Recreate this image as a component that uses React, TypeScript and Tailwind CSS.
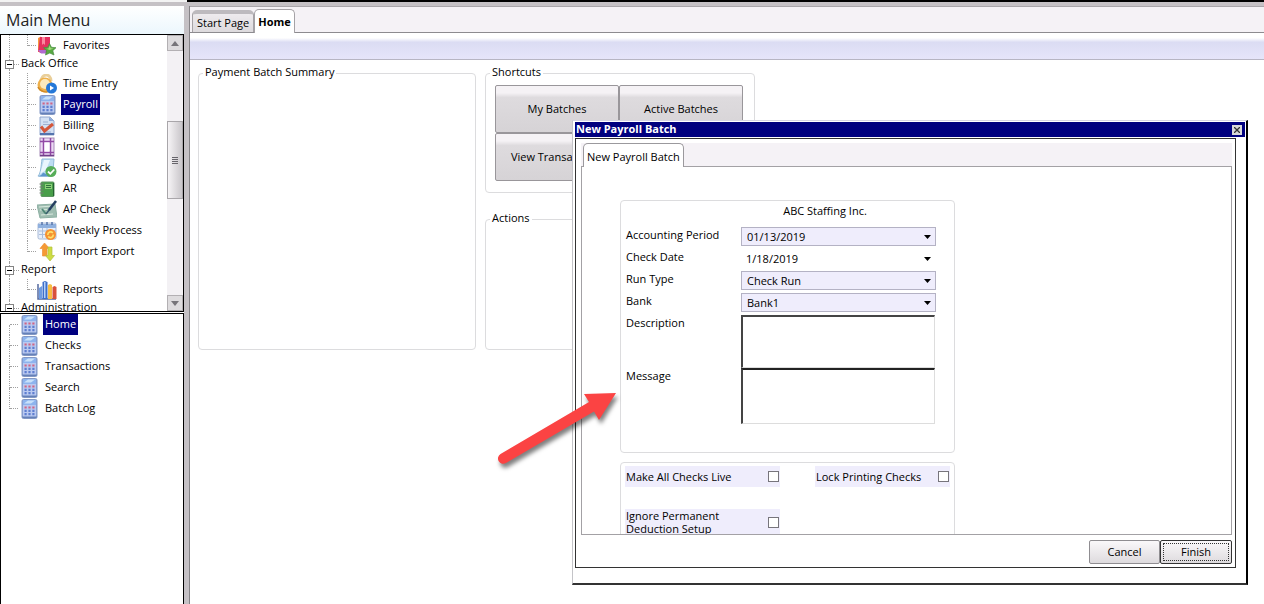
import { useState } from 'react'
import type { ReactNode } from 'react'

function CalculatorIcon() {
  return (
    <svg viewBox="0 0 20 20" className="size-5 shrink-0" aria-hidden="true">
      <rect x="3" y="0.5" width="15" height="19" rx="1.5" fill="#8aa5dc" stroke="#8498c4" />
      <path d="M3.500 17h14v2h-14z" fill="#6480b8" />
      <rect x="4" y="1" width="13" height="5" fill="#8db4ee" />
      <path d="M5 4.500 9 1.500h7l-4 3z" fill="#c9e1fa" />
      <rect x="4" y="6" width="13" height="11.500" fill="#bac9f0" />
      <path d="M5.500 8.500h2.200M9.400 8.500h2.200M13.300 8.500h2.200" stroke="#cf6585" strokeWidth="2.200" />
      <path
        d="M5.500 11.800h2.200M9.400 11.800h2.200M13.300 11.800h2.200M5.500 15.200h2.200M9.400 15.200h2.200M13.300 15.200h2.200"
        stroke="#5f7fd0"
        strokeWidth="2.200"
      />
    </svg>
  )
}

function FavoritesIcon() {
  return (
    <svg viewBox="0 0 20 20" className="size-5 shrink-0" aria-hidden="true">
      <path d="M1 2 4 0.5V17l-3-1.500z" fill="#f59a3c" />
      <path d="M3 1h10v16H4l-3-1.500z" fill="#e5305f" />
      <path d="M5 1h3v8L6.500 7.500 5 9z" fill="#f98a9f" />
      <path d="M1 14h8v3.500H4z" fill="#b06ad0" />
      <path
        d="m12.500 7.500 2 3.800 4.500.4-3.200 3 1.200 4.300-4.200-2-4.300 2 1-4.300-3-3 4.300-.5z"
        fill="#58a942"
        stroke="#4b8d43"
        strokeWidth="0.7"
      />
      <path d="m12.500 9.500 1.300 2.700 2.700.4-4 1.400-3-1.300 2-.3z" fill="#a3dc7c" />
    </svg>
  )
}

function TimeEntryIcon() {
  return (
    <svg viewBox="0 0 20 20" className="size-5 shrink-0" aria-hidden="true">
      <path d="M4 8c0-9 10-9 10-1" fill="none" stroke="#e9cf9a" strokeWidth="3" />
      <circle cx="8" cy="11" r="7.500" fill="#eeb04b" />
      <circle cx="8" cy="10" r="5" fill="#fbe9bd" />
      <path d="M1 13c2 5 9 6 12 4" fill="none" stroke="#d08a26" strokeWidth="1.500" />
      <circle cx="14.500" cy="14" r="5.500" fill="#2478d8" />
      <path d="m13 11.500 4 2.500-4 2.500z" fill="#fff" />
    </svg>
  )
}

function BillingIcon() {
  return (
    <svg viewBox="0 0 20 20" className="size-5 shrink-0" aria-hidden="true">
      <path d="M3 1h10l4 4v14H3z" fill="#d3e1f4" stroke="#93a8ce" />
      <path d="M12 1v4h5z" fill="#8ba9d8" />
      <path d="M6 6h5M6 8.500h8M6 16h8" stroke="#9db1d3" />
      <path d="m4 10.500 3.500 4.500L16 8" fill="none" stroke="#d4573b" strokeWidth="3" />
      <path d="M3 18h14" stroke="#5474ae" strokeWidth="2" />
    </svg>
  )
}

function InvoiceIcon() {
  return (
    <svg viewBox="0 0 20 20" className="size-5 shrink-0" aria-hidden="true">
      <rect x="3" y="1" width="14" height="18" fill="#ecd9f4" stroke="#a58bb8" />
      <path d="M6.500 1v18M13.500 1v18M3 4.500h14M3 15.500h14" stroke="#914aa5" strokeWidth="1.500" />
      <rect x="7.500" y="5.500" width="5" height="9" fill="#fff" />
      <path d="M3 18.500h14" stroke="#72408a" strokeWidth="1.500" />
    </svg>
  )
}

function PaycheckIcon() {
  return (
    <svg viewBox="0 0 20 20" className="size-5 shrink-0" aria-hidden="true">
      <path d="M5 1h12l-1 12-4 5H1c3-3 3-10 4-17z" fill="#bddcf2" stroke="#93bbd9" />
      <path d="M7 2h6L9 12 3 16z" fill="#eaf6fe" />
      <path d="M0 18.500c3 0 5-2 6-4l8 4z" fill="#5c95cb" />
      <circle cx="14" cy="13.500" r="5.500" fill="#57ae59" />
      <path d="m11 13.500 2.300 2.300 4-4.300" fill="none" stroke="#fff" strokeWidth="1.800" />
    </svg>
  )
}

function LedgerIcon() {
  return (
    <svg viewBox="0 0 20 20" className="size-5 shrink-0" aria-hidden="true">
      <rect x="4" y="3" width="13" height="14.500" rx="1" fill="#489e49" stroke="#5c9460" />
      <rect x="8" y="5" width="7" height="5" fill="#8bcf78" />
      <path d="M9 6.500h5M9 8.500h5" stroke="#2f713d" />
      <path d="M2.500 5h4M2.500 8h4M2.500 11h4M2.500 14h4" stroke="#727b75" strokeWidth="1.200" />
      <path d="M16.500 4v13" stroke="#256132" />
    </svg>
  )
}

function ApCheckIcon() {
  return (
    <svg viewBox="0 0 20 20" className="size-5 shrink-0" aria-hidden="true">
      <path d="m0 5 18-1 2 13-17 1z" fill="#9fbdb1" stroke="#8db0a3" />
      <path d="m2 7 14-1M3 10l7-.5M4 15l12-1" stroke="#d9e9df" />
      <path d="m5 9 4 5" stroke="#4f8777" strokeWidth="2" />
      <path d="m9 14 4-5" stroke="#385e6d" strokeWidth="1.500" />
      <path d="m12 10 7-9" stroke="#263f61" strokeWidth="2.600" />
    </svg>
  )
}

function WeeklyIcon() {
  return (
    <svg viewBox="0 0 20 20" className="size-5 shrink-0" aria-hidden="true">
      <rect x="1" y="2" width="18" height="16" rx="1.5" fill="#e7eefa" stroke="#a9bad7" />
      <path d="M1 3h18v4H1z" fill="#8fb0de" />
      <path d="M5 1v3M10 1v3M15 1v3" stroke="#5876aa" strokeWidth="1.500" />
      <path d="M2 10h17M2 13.500h17M5.500 7v10M10 7v10" stroke="#a9bddc" />
      <circle cx="13.500" cy="13.500" r="5.500" fill="#f59132" />
      <path
        d="M10.800 14a2.800 2.800 0 0 1 5-2M16.200 13.500a2.800 2.800 0 0 1-5 2"
        fill="none"
        stroke="#ffe269"
        strokeWidth="1.600"
      />
    </svg>
  )
}

function ImportExportIcon() {
  return (
    <svg viewBox="0 0 20 20" className="size-5 shrink-0" aria-hidden="true">
      <path d="m7.500 1 5 5.500H10V14H5.500V6.500H3z" fill="#f59a35" stroke="#ee8f3a" strokeWidth="0.7" />
      <path d="m13 19-4.500-5.500h2.500V5h4v8.500h2.500z" fill="#cddc42" stroke="#b3c03d" strokeWidth="0.7" />
    </svg>
  )
}

function ReportsIcon() {
  return (
    <svg viewBox="0 0 20 20" className="size-5 shrink-0" aria-hidden="true">
      <path d="M1 4v15h18" fill="none" stroke="#54699e" strokeWidth="1.500" />
      <path d="m2 8 3-2v13H2z" fill="#6e9be1" />
      <path d="M5.500 2 8 1l2.500 1v17h-5z" fill="#3d6fca" />
      <path d="M7 2h1.500v16H7z" fill="#b6d0f5" />
      <path d="m11 5 2-1 2 1v14h-4z" fill="#f7bd42" />
      <path d="m15.500 7 2-1 2 1v12h-4z" fill="#d8503c" />
    </svg>
  )
}

const backOffice = [
  { label: 'Time Entry', icon: <TimeEntryIcon /> },
  { label: 'Payroll', icon: <CalculatorIcon />, selected: true },
  { label: 'Billing', icon: <BillingIcon /> },
  { label: 'Invoice', icon: <InvoiceIcon /> },
  { label: 'Paycheck', icon: <PaycheckIcon /> },
  { label: 'AR', icon: <LedgerIcon /> },
  { label: 'AP Check', icon: <ApCheckIcon /> },
  { label: 'Weekly Process', icon: <WeeklyIcon /> },
  { label: 'Import Export', icon: <ImportExportIcon /> },
]

const payrollPages = ['Home', 'Checks', 'Transactions', 'Search', 'Batch Log']

function TreeLabel({ label, selected }: { label: string; selected?: boolean }) {
  return (
    <a
      href="#"
      className={
        selected
          ? 'flex h-full items-center bg-[#00007f] px-0.5 text-white'
          : 'flex h-full items-center px-0.5'
      }
    >
      {label}
    </a>
  )
}

function TreeItem({ label, icon, selected, last }: { label: string; icon: ReactNode; selected?: boolean; last?: boolean }) {
  return (
    <li className="flex h-[21px] items-center">
      <span className="w-[9px] self-stretch border-r border-dotted border-[#a0a0a0]" />
      <span
        className={
          last
            ? 'h-[11px] w-[18px] self-start border-r border-dotted border-[#a0a0a0]'
            : 'w-[18px] self-stretch border-r border-dotted border-[#a0a0a0]'
        }
      />
      <span className="mr-px w-2 border-t border-dotted border-[#a0a0a0]" />
      <span className="mr-1">{icon}</span>
      <TreeLabel label={label} selected={selected} />
    </li>
  )
}

function TreeGroup({ label }: { label: string }) {
  return (
    <li className="flex h-[17px] items-center">
      <span className="ml-1 flex w-[9px] flex-col self-stretch">
        <span className="w-[5px] flex-1 border-r border-dotted border-[#a0a0a0]" />
        <button
          type="button"
          aria-label={`Collapse ${label}`}
          className="flex size-[9px] items-center justify-center border border-[#848484] bg-white"
        >
          <span className="h-px w-[5px] bg-black" />
        </button>
        <span className="w-[5px] flex-1 border-r border-dotted border-[#a0a0a0]" />
      </span>
      <span className="mr-0.5 w-[5px] border-t border-dotted border-[#a0a0a0]" />
      <span className="pb-0.5">{label}</span>
    </li>
  )
}

function ScrollButton({ up }: { up?: boolean }) {
  return (
    <button
      type="button"
      aria-label={up ? 'Scroll up' : 'Scroll down'}
      className="flex size-4 items-center justify-center border border-[#b3b0b3] bg-[#dedcde]"
    >
      <svg viewBox="0 0 8 5" className="h-[5px] w-2" aria-hidden="true">
        <path d={up ? 'M4 0 8 5H0z' : 'M0 0h8L4 5z'} fill="#77757a" />
      </svg>
    </button>
  )
}

function Sidebar() {
  return (
    <aside className="flex w-[184px] shrink-0 flex-col">
      <h1 className="flex h-7 items-center bg-linear-to-b from-white to-[#ecf7fd] px-1.5 text-base text-[#222]">
        Main Menu
      </h1>
      <div className="flex h-[278px] shrink-0 border border-black bg-white">
        <ul className="min-w-0 flex-1 overflow-hidden">
          <TreeItem label="Favorites" icon={<FavoritesIcon />} last />
          <TreeGroup label="Back Office" />
          {backOffice.map((item, i) => (
            <TreeItem key={item.label} {...item} last={i === backOffice.length - 1} />
          ))}
          <TreeGroup label="Report" />
          <TreeItem label="Reports" icon={<ReportsIcon />} last />
          <TreeGroup label="Administration" />
        </ul>
        <div className="flex w-4 flex-col bg-[#f3f1f4]">
          <ScrollButton up />
          <div className="mt-[70px] flex h-[78px] flex-col items-center justify-center gap-px border border-[#a9a6aa] bg-linear-to-r from-[#f6f4f6] to-[#c9c6ca]">
            <span className="h-px w-1.5 bg-[#66646a]" />
            <span className="h-px w-1.5 bg-[#66646a]" />
            <span className="h-px w-1.5 bg-[#66646a]" />
            <span className="h-px w-1.5 bg-[#66646a]" />
          </div>
          <div className="flex-1" />
          <ScrollButton />
        </div>
      </div>
      <ul className="mt-px flex-1 border border-b-0 border-black bg-white">
        {payrollPages.map((page, i) => (
          <li key={page} className="flex h-[21px] items-center">
            <span className="flex w-[9px] flex-col self-stretch">
              <span className={i === 0 ? 'flex-1' : 'flex-1 border-r border-dotted border-[#a0a0a0]'} />
              <span
                className={
                  i === payrollPages.length - 1 ? 'flex-1' : 'flex-1 border-r border-dotted border-[#a0a0a0]'
                }
              />
            </span>
            <span className="mr-px w-2 border-t border-dotted border-[#a0a0a0]" />
            <span className="mr-1">
              <CalculatorIcon />
            </span>
            <TreeLabel label={page} selected={i === 0} />
          </li>
        ))}
      </ul>
    </aside>
  )
}

function ShortcutButton({ children }: { children: ReactNode }) {
  return (
    <button
      type="button"
      className="h-12 rounded-xs border border-[#99969a] bg-linear-to-b from-[#f5f2f5] from-15% via-[#dedbde] via-25% to-[#d6d3d6]"
    >
      {children}
    </button>
  )
}

function Panel({ title, className, children }: { title: string; className: string; children?: ReactNode }) {
  return (
    <fieldset className={`rounded-sm border border-[#dcdcde] ${className}`}>
      <legend className="ml-1 h-4 px-0.5 leading-[14px]">{title}</legend>
      {children}
    </fieldset>
  )
}

function DropDown({ id, value, plain }: { id: string; value: string; plain?: boolean }) {
  return (
    <div className="relative h-[19px]">
      <select
        id={id}
        defaultValue={value}
        className={
          plain
            ? 'h-full w-full appearance-none bg-white px-[5px]'
            : 'h-full w-full appearance-none border border-[#b4b2c4] bg-[#efedfc] px-[5px]'
        }
      >
        <option>{value}</option>
      </select>
      <svg
        viewBox="0 0 7 4"
        className="pointer-events-none absolute top-2 right-[5px] h-1 w-[7px]"
        aria-hidden="true"
      >
        <path d="M0 0h7L3.500 4z" fill="#000" />
      </svg>
    </div>
  )
}

function CheckField({ label, className }: { label: string; className: string }) {
  return (
    <label className={`flex items-center justify-between bg-[#efedfc] px-px leading-[13px] ${className}`}>
      <span className="max-w-28">{label}</span>
      <input type="checkbox" className="size-[11px] appearance-none border border-[#77757c] bg-white" />
    </label>
  )
}

function PayrollDialog({ onClose }: { onClose: () => void }) {
  return (
    <section
      role="dialog"
      aria-label="New Payroll Batch"
      className="absolute top-[120px] right-4 bottom-[19px] left-[572px] flex flex-col border-t border-r-2 border-b-2 border-l border-t-[#d5d5e2] border-r-black border-b-[#333] border-l-[#c4c4c8] bg-white pt-px pl-0.5"
    >
      <header className="mr-px flex h-[15px] shrink-0 items-center justify-between bg-[#00007f] pr-[3px] pl-px font-bold text-white">
        New Payroll Batch
        <button
          type="button"
          aria-label="Close"
          onClick={onClose}
          className="flex size-[10px] items-center justify-center bg-[#d8d8d8]"
        >
          <svg viewBox="0 0 6 6" className="size-1.5" aria-hidden="true">
            <path d="m0 0 6 6M6 0 0 6" stroke="#333" strokeWidth="1.300" />
          </svg>
        </button>
      </header>

      <div className="mt-px mr-[10px] mb-[15px] flex min-h-0 flex-1 flex-col border border-[#333] pt-1 pr-[3px] pb-[3px] pl-[5px]">
        <div className="flex h-[23px] shrink-0 bg-[#f5f2f6] pl-0.5">
          <button
            type="button"
            className="relative z-10 -mb-px rounded-t-[5px] border border-b-0 border-[#9b999d] bg-white px-[3px] pt-1"
          >
            New Payroll Batch
          </button>
        </div>

        <div className="min-h-0 flex-1 overflow-hidden border border-[#a3a1a5] pt-[33px] pl-[38px]">
          <div className="h-[253px] w-[335px] rounded-sm border border-[#dcdcde] pt-px pl-[5px]">
            <p className="ml-[74px] w-[250px] text-center leading-[18px]">ABC Staffing Inc.</p>
            <div className="mt-[7px] grid grid-cols-[115px_195px] gap-y-[3px] leading-4">
              <label htmlFor="period">Accounting Period</label>
              <DropDown id="period" value="01/13/2019" />
              <label htmlFor="check-date">Check Date</label>
              <DropDown id="check-date" value="1/18/2019" plain />
              <label htmlFor="run-type">Run Type</label>
              <DropDown id="run-type" value="Check Run" />
              <label htmlFor="bank">Bank</label>
              <DropDown id="bank" value="Bank1" />
            </div>
            <div className="mt-[3px] grid grid-cols-[115px_195px] leading-4">
              <label htmlFor="description">Description</label>
              <textarea
                id="description"
                className="block h-[53px] w-[194px] resize-none border-t-2 border-r border-b border-l-2 border-[#ddd] border-t-[#444] border-l-[#444]"
              />
              <label htmlFor="message">Message</label>
              <textarea
                id="message"
                className="block h-14 w-[194px] resize-none border-t-2 border-r border-b border-l-2 border-[#ddd] border-t-[#222] border-l-[#444]"
              />
            </div>
          </div>

          <div className="mt-[9px] w-[335px] rounded-sm border border-[#dcdcde] p-1 pt-[3px]">
            <div className="flex justify-between">
              <CheckField label="Make All Checks Live" className="h-[21px] w-[155px]" />
              <CheckField label="Lock Printing Checks" className="h-[21px] w-[135px]" />
            </div>
            <CheckField label="Ignore Permanent Deduction Setup" className="mt-[22px] h-[26px] w-[155px]" />
          </div>
        </div>

        <footer className="mt-[5px] flex h-6 shrink-0 justify-end">
          <button
            type="button"
            onClick={onClose}
            className="w-[71px] rounded-xs border border-[#8f8d91] bg-linear-to-b from-[#faf8fa] to-[#dedbde]"
          >
            Cancel
          </button>
          <button
            type="submit"
            className="flex w-[72px] rounded-xs border border-[#333] bg-linear-to-b from-[#faf8fa] to-[#dedbde] p-0.5"
          >
            <span className="flex flex-1 items-center justify-center self-stretch border border-dotted border-[#333]">
              Finish
            </span>
          </button>
        </footer>
      </div>
    </section>
  )
}

function PointerArrow() {
  return (
    <svg
      viewBox="0 0 130 90"
      className="pointer-events-none absolute top-[384px] left-[494px] h-[90px] w-[130px] drop-shadow-[2px_4px_2px_rgba(0,0,0,0.5)]"
      aria-hidden="true"
    >
      <path d="M6.500 70 95 18l-5-8 32-1-17 27-5-8.500L12 79a5 5 0 0 1-5.500-9z" fill="#fb4343" />
    </svg>
  )
}

export default function App() {
  const [open, setOpen] = useState(true)

  return (
    <div className="relative flex h-screen flex-col overflow-hidden bg-white font-['Open_Sans',sans-serif] text-[11px] text-black">
      <div className="flex h-0.5 shrink-0">
        <div className="w-[187px] bg-[#f3f3f3]" />
        <div className="flex-1 bg-black" />
      </div>
      <div className="h-1 shrink-0 bg-[#c5c1c5]" />

      <div className="flex min-h-0 flex-1">
        <Sidebar />
        <div className="w-[5px] shrink-0 bg-[#c5c1c5]" />

        <main className="flex min-w-0 flex-1 flex-col border-l border-[#858387]">
          <nav className="flex h-[27px] shrink-0 items-end border-t border-b border-t-[#a9a6aa] border-b-[#8d8b8f] bg-[#f5f2f6] pl-0.5">
            <button
              type="button"
              className="h-[22px] rounded-t-[5px] border border-t-4 border-b-0 border-[#a5a2a6] border-t-[#bdbabe] bg-linear-to-b from-[#eeebee] to-[#dddadd] px-1"
            >
              Start Page
            </button>
            <button
              type="button"
              className="-mb-px h-6 rounded-t-[5px] border border-b-0 border-[#a5a2a6] bg-white px-[3px] pt-0.5 font-bold"
            >
              Home
            </button>
          </nav>
          <div className="mt-[5px] h-[22px] shrink-0 border-b border-[#b7b5c3] bg-linear-to-b from-white via-[#dbdcf3] via-20% to-[#e6e5fa]" />

          <div className="flex gap-[9px] pt-[5px] pl-2">
            <Panel title="Payment Batch Summary" className="h-[285px] w-[278px]" />
            <div className="flex w-[270px] flex-col gap-[18px]">
              <Panel title="Shortcuts" className="h-32">
                <div className="mt-1 mr-[11px] ml-[9px] grid grid-cols-2">
                  <ShortcutButton>My Batches</ShortcutButton>
                  <ShortcutButton>Active Batches</ShortcutButton>
                  <ShortcutButton>View Transactions</ShortcutButton>
                </div>
              </Panel>
              <Panel title="Actions" className="flex-1" />
            </div>
          </div>
        </main>
      </div>

      {open && <PayrollDialog onClose={() => setOpen(false)} />}
      <PointerArrow />
    </div>
  )
}
